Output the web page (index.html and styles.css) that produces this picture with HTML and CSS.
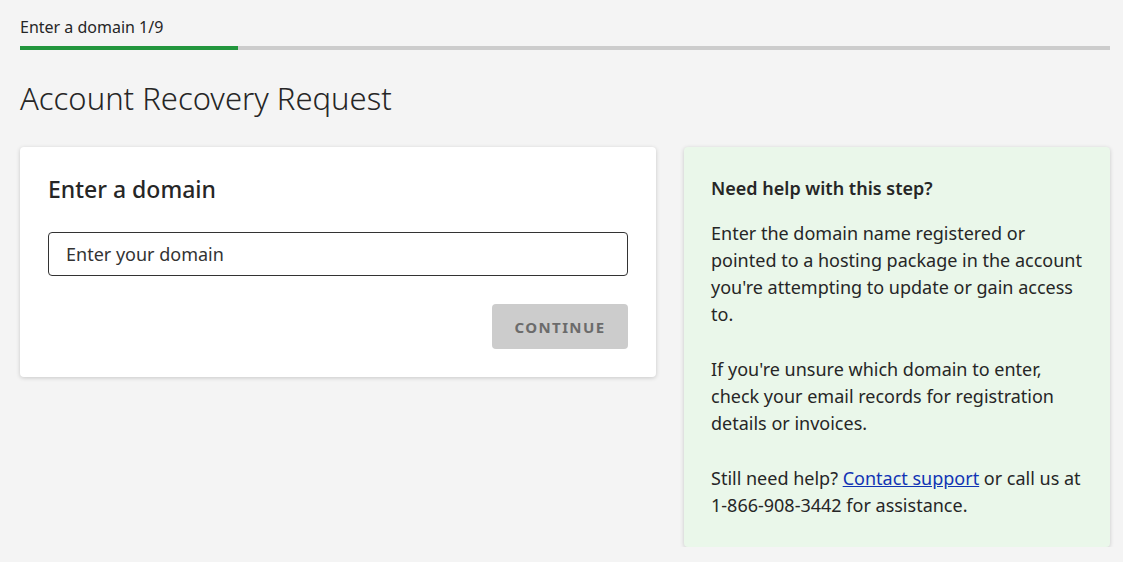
FILE: index.html
```html
<!DOCTYPE html>
<html lang="en">
<head>
<meta charset="utf-8">
<title>Account Recovery Request</title>
<link rel="stylesheet" href="styles.css">
</head>
<body>
<div class="page">
  <div class="progress">
    <div class="progress-label">Enter a domain 1/9</div>
    <div class="progress-track"><div class="progress-fill" style="width:20%"></div></div>
  </div>
  <h1 class="title">Account Recovery Request</h1>
  <div class="layout">
    <div class="card form-card">
      <h2 class="card-title">Enter a domain</h2>
      <input class="domain-input" type="text" placeholder="Enter your domain">
      <div class="actions">
        <button class="btn-continue" type="button" disabled>CONTINUE</button>
      </div>
    </div>
    <div class="card help-card">
      <h3 class="help-title">Need help with this step?</h3>
      <p class="help-text">Enter the domain name registered or pointed to a hosting package in the account you're attempting to update or gain access to.</p>
      <p class="help-text">If you're unsure which domain to enter, check your email records for registration details or invoices.</p>
      <p class="help-text">Still need help? <a href="#" class="link">Contact support</a> or call us at <span class="nowrap">1-866-908-3442</span> for assistance.</p>
    </div>
  </div>
</div>
</body>
</html>
```
FILE: styles.css
```css
* { box-sizing: border-box; }
html, body { margin: 0; padding: 0; }
body {
  background: #f4f4f4;
  font-family: "Noto Sans", "Open Sans", sans-serif;
  color: #262626;
}
.page {
  padding: 14px 13px 0 20px;
}
.progress-label {
  font-size: 16px;
  line-height: 26px;
  color: #262626;
}
.progress-track {
  margin-top: 6px;
  height: 4px;
  background: #cccccc;
}
.progress-fill {
  height: 100%;
  background: #22963d;
}
.title {
  margin: 26px 0 0;
  font-size: 31px;
  font-weight: 300;
  line-height: 44px;
  color: #262626;
}
.layout {
  margin-top: 27px;
  display: grid;
  grid-template-columns: 636fr 426fr;
  gap: 28px;
  align-items: start;
}
.card {
  border-radius: 4px;
  box-shadow: 0 1px 4px rgba(0,0,0,0.18);
}
.form-card {
  background: #ffffff;
  padding: 26px 28px 28px;
}
.card-title {
  margin: 0;
  font-size: 23px;
  font-weight: 500;
  line-height: 32px;
  color: #262626;
}
.domain-input {
  display: block;
  width: 100%;
  margin-top: 27px;
  height: 44px;
  border: 1px solid #333;
  border-radius: 4px;
  padding: 0 17px;
  font-family: inherit;
  font-size: 18px;
  color: #262626;
  background: #fff;
  outline: none;
}
.domain-input::placeholder { color: #333; opacity: 1; }
.actions {
  display: flex;
  justify-content: flex-end;
  margin-top: 28px;
}
.btn-continue {
  width: 136px;
  height: 45px;
  border: 0;
  border-radius: 4px;
  background: #cccccc;
  color: #6b6b6b;
  font-family: inherit;
  font-size: 15px;
  font-weight: 700;
  letter-spacing: 1.4px;
}
.help-card {
  background: #eaf7ea;
  padding: 28px 27px 28px;
}
.help-title {
  margin: 0;
  font-size: 18px;
  font-weight: 600;
  line-height: 26px;
  color: #262626;
}
.help-text {
  margin: 19px 0 0;
  font-size: 18px;
  line-height: 27px;
  color: #262626;
}
.help-text + .help-text { margin-top: 28px; }
.nowrap { white-space: nowrap; }
.link { color: #1134b4; text-decoration: underline; }
```
